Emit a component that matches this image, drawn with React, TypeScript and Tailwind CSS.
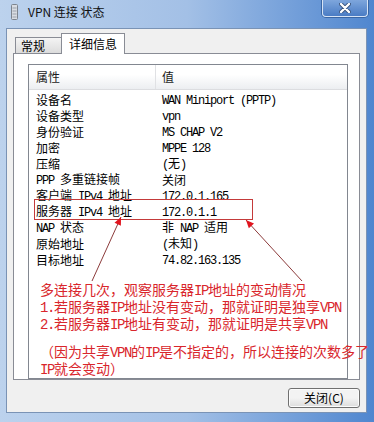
import React from 'react';

const rows: [string, string][] = [
  ['设备名', 'WAN Miniport (PPTP)'],
  ['设备类型', 'vpn'],
  ['身份验证', 'MS CHAP V2'],
  ['加密', 'MPPE 128'],
  ['压缩', '(无)'],
  ['PPP 多重链接帧', '关闭'],
  ['客户端 IPv4 地址', '172.0.1.165'],
  ['服务器 IPv4 地址', '172.0.1.1'],
  ['NAP 状态', '非 NAP 适用'],
  ['原始地址', '(未知)'],
  ['目标地址', '74.82.163.135'],
];

// SimSun-style text: latin runs are half width
const Mixed = ({ text }: { text: string }) => (
  <>
    {text.split(/([\x20-\x7e]+)/).map((part, i) =>
      /^[\x20-\x7e]+$/.test(part) ? (
        <span key={i} className="font-mono tracking-[-0.1em]">
          {part}
        </span>
      ) : (
        <React.Fragment key={i}>{part}</React.Fragment>
      )
    )}
  </>
);

const Arrow = ({ x1, y1, x2, y2 }: { x1: number; y1: number; x2: number; y2: number }) => {
  const len = Math.hypot(x2 - x1, y2 - y1);
  const ux = (x2 - x1) / len;
  const uy = (y2 - y1) / len;
  const bx = x2 - ux * 8;
  const by = y2 - uy * 8;
  const pts = `${x2},${y2} ${bx - uy * 3.5},${by + ux * 3.5} ${bx + uy * 3.5},${by - ux * 3.5}`;
  return (
    <g>
      <line x1={x1} y1={y1} x2={x2} y2={y2} stroke="#8c3b3b" strokeWidth="1" />
      <polygon points={pts} fill="#e0141e" />
    </g>
  );
};

export default function App() {
  return (
    <div className="w-[374px] h-[422px] flex flex-col overflow-hidden bg-linear-to-r from-[#bcd2ed] via-[#a3c0e6] to-[#4f86cf] font-['Noto_Sans_CJK_SC',sans-serif] text-black">
      {/* title bar */}
      <div className="h-[28px] flex items-start shrink-0">
        <svg width="7" height="16" viewBox="0 0 7 16" className="ml-[11px] mt-[4px]">
          <rect x="0.5" y="0.5" width="6" height="15" rx="1" fill="#d8dce2" stroke="#7d848e" />
          <line x1="1.5" y1="4" x2="5.5" y2="4" stroke="#9aa1ab" />
          <line x1="1.5" y1="7" x2="5.5" y2="7" stroke="#9aa1ab" />
          <line x1="1.5" y1="10" x2="5.5" y2="10" stroke="#9aa1ab" />
          <line x1="1.5" y1="13" x2="5.5" y2="13" stroke="#9aa1ab" />
        </svg>
        <div className="ml-[10px] mt-[4px] text-[12px] leading-[16px] text-[#111]">VPN 连接 状态</div>
        <div className="ml-auto mr-[6px] w-[46px] h-[17px] rounded-b-[4px] border border-t-0 border-[#d7e4f5] bg-linear-to-b from-[#7ea6dc] to-[#4a7cc4] shadow-[0_0_0_1px_#3a66a4] flex items-center justify-center">
          <svg width="12" height="10" viewBox="0 0 12 10">
            <path d="M2 1 L10 9 M10 1 L2 9" stroke="#35507a" strokeWidth="4" strokeLinecap="round" />
            <path d="M2 1 L10 9 M10 1 L2 9" stroke="#ffffff" strokeWidth="2.4" strokeLinecap="round" />
          </svg>
        </div>
      </div>

      {/* client area */}
      <div className="flex-1 ml-[6px] mr-[7px] mb-[9px] border border-[#7a93b5] bg-[#f0f0f0] flex flex-col pt-[4px] px-[6px]">
        {/* tabs */}
        <div className="flex items-end pl-[2px] h-[21px] -mb-px relative z-10 text-[12px]">
          <div className="h-[16px] mb-px w-[47px] border border-b-0 border-[#898c95] bg-linear-to-b from-[#f4f4f4] to-[#dcdcdc] flex items-center pl-[5px] leading-[16px]">
            常规
          </div>
          <div className="h-[21px] w-[64px] -ml-px border border-b-0 border-[#898c95] bg-white flex items-center pl-[7px] leading-[16px]">
            详细信息
          </div>
        </div>

        {/* tab panel */}
        <div className="h-[327px] border border-[#898c95] bg-white pt-[10px] pl-[14px] pr-[11px] pb-[12px] flex flex-col">
          <div className="relative flex-1 border border-[#828790] bg-white">
            <div className="h-[25px] flex border-b border-[#dcdde0] bg-linear-to-b from-white from-40% to-[#eceef1] text-[12px] text-[#1b1b1b]">
              <div className="w-[127px] border-r border-[#e0e1e4] pl-[7px] flex items-center">属性</div>
              <div className="pl-[6px] flex items-center">值</div>
            </div>
            <div className="pt-[2px]">
              {rows.map(([name, value]) => (
                <div key={name} className="h-[16px] flex items-center text-[12px] leading-[16px] whitespace-nowrap">
                  <div className="w-[127px] pl-[7px]">
                    <Mixed text={name} />
                  </div>
                  <div className="pl-[6px]">
                    <Mixed text={value} />
                  </div>
                </div>
              ))}
            </div>

            {/* annotation text */}
            <div className="mt-[14px] pl-[11px] text-[14px] text-[#d9262c] whitespace-nowrap">
              <div className="leading-[15px]">
                <div>
                  <Mixed text="多连接几次，观察服务器IP地址的变动情况" />
                </div>
                <div>
                  <Mixed text="1.若服务器IP地址没有变动，那就证明是独享VPN" />
                </div>
                <div>
                  <Mixed text="2.若服务器IP地址有变动，那就证明是共享VPN" />
                </div>
              </div>
              <div className="mt-[11px] leading-[15px]">
                <div>
                  <Mixed text="（因为共享VPN的IP是不指定的，所以连接的次数多了" />
                </div>
                <div>
                  <Mixed text="IP就会变动）" />
                </div>
              </div>
            </div>

            {/* red box + arrows drawn over the list */}
            <div className="absolute left-[5px] top-[134px] w-[219px] h-[21px] border border-[#c43a3a]" />
            <svg className="absolute left-0 top-0 overflow-visible pointer-events-none" width="318" height="302">
              <Arrow x1={63} y1={216} x2={92} y2={152} />
              <Arrow x1={273} y1={216} x2={217} y2={155} />
            </svg>
          </div>
        </div>

        {/* buttons */}
        <div className="flex justify-end pt-[8px]">
          <button className="w-[72px] h-[20px] rounded-[3px] border border-[#707070] bg-linear-to-b from-[#f3f3f3] from-50% to-[#dcdcdc] shadow-[inset_0_0_0_1px_#fcfcfc] text-[12px] leading-[16px] text-black flex items-center justify-center">
            关闭(C)
          </button>
        </div>
      </div>
    </div>
  );
}
